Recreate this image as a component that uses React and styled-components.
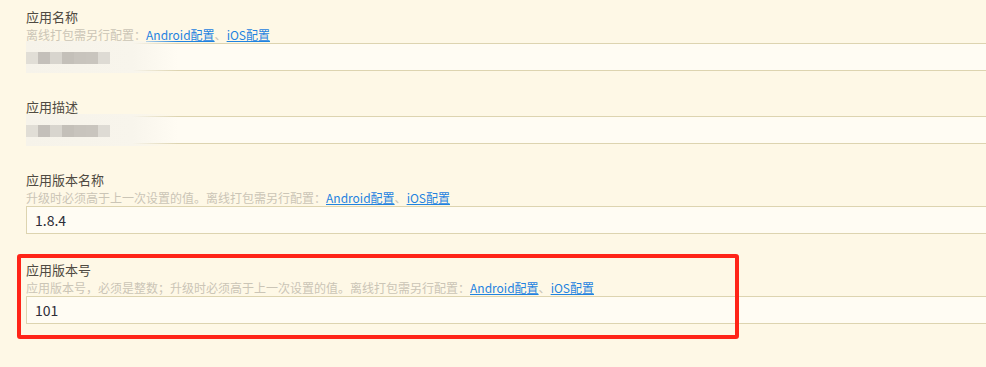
import React from 'react';
import styled, { createGlobalStyle } from 'styled-components';

const GlobalStyle = createGlobalStyle`
  html {
    overflow: hidden;
    background: #fef8e6;
  }
  body {
    margin: 0;
    padding: 0;
    font-family: "Noto Sans CJK SC", "Noto Sans", sans-serif;
  }
`;

const fields = [
  { label: '应用名称', hint: '离线打包需另行配置：', links: true, masked: true },
  { label: '应用描述', masked: true },
  { label: '应用版本名称', hint: '升级时必须高于上一次设置的值。离线打包需另行配置：', links: true, value: '1.8.4' },
  {
    label: '应用版本号',
    hint: '应用版本号，必须是整数；升级时必须高于上一次设置的值。离线打包需另行配置：',
    links: true,
    value: '101',
    marked: true,
  },
];

const maskTones = ['#e1ded6', '#c4c0ba', '#d8d5ce', '#c4c0b9', '#c8c4bd', '#c9c5be', '#dedbd4'];

const App = () => (
  <>
    <GlobalStyle />
    <Page>
      {fields.map((f) => (
        <Group key={f.label}>
          <Label>{f.label}</Label>
          {f.hint && (
            <Hint>
              {f.hint}
              {f.links && (
                <>
                  <Link href="#">Android配置</Link>
                  <Sep>、</Sep>
                  <Link href="#">iOS配置</Link>
                </>
              )}
            </Hint>
          )}
          <InputWrap>
            <TextInput readOnly defaultValue={f.value || ''} />
            {f.masked && (
              <Mosaic>
                <Blocks>
                  {maskTones.map((c, i) => (
                    <Block key={i} $tone={c} />
                  ))}
                </Blocks>
              </Mosaic>
            )}
          </InputWrap>
          {f.marked && <Highlight />}
        </Group>
      ))}
    </Page>
  </>
);

export default App;

const Page = styled.div`
  padding: 8px 0 40px 26px;
  display: flex;
  flex-direction: column;
  gap: 27px;
`;
const Group = styled.div`
  position: relative;
  display: flex;
  flex-direction: column;
`;
const Label = styled.div`
  font-size: 13px;
  line-height: 18px;
  color: #4f4a42;
`;
const Hint = styled.div`
  font-size: 12px;
  line-height: 17px;
  color: #cbc5b6;
  white-space: nowrap;
`;
const Link = styled.a`
  color: #1f83e0;
  text-decoration: underline;
`;
const Sep = styled.span`
  color: #cbc5b6;
`;
const InputWrap = styled.div`
  position: relative;
`;
const TextInput = styled.input`
  display: block;
  box-sizing: border-box;
  width: calc(100% + 20px);
  height: 28px;
  margin: 0;
  padding: 0 8px;
  border: 1px solid #ddd4b0;
  border-radius: 0;
  background: #fffcf3;
  font-family: "Noto Sans CJK SC", "Noto Sans", sans-serif;
  font-size: 14px;
  color: #2e2e38;
  outline: none;
`;
const Mosaic = styled.div`
  position: absolute;
  left: 0;
  top: -2px;
  width: 152px;
  height: 32px;
  background: linear-gradient(90deg, #f6f3ea 0%, #f8f5ec 70%, rgba(255, 252, 243, 0) 100%);
`;
const Blocks = styled.div`
  display: flex;
  margin-top: 11px;
`;
const Block = styled.div`
  width: 12px;
  height: 12px;
  background: ${(p) => p.$tone};
`;
const Highlight = styled.div`
  position: absolute;
  z-index: 2;
  left: -9px;
  top: -7px;
  width: 722px;
  height: 85px;
  box-sizing: border-box;
  border: 4px solid #ff2418;
  border-radius: 3px;
  pointer-events: none;
`;
